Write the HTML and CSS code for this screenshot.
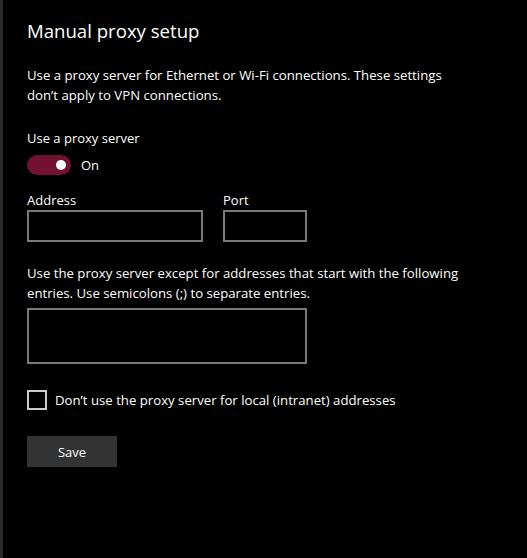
FILE: index.html
```html
<!DOCTYPE html>
<html>
<head>
<meta charset="utf-8">
<link rel="stylesheet" href="styles.css">
</head>
<body>
<div class="page">
  <h1 class="title">Manual proxy setup</h1>
  <p class="desc">Use a proxy server for Ethernet or Wi-Fi connections. These settings don’t apply to VPN connections.</p>
  <div class="label-main">Use a proxy server</div>
  <div class="toggle-row">
    <span class="toggle"><span class="knob"></span></span>
    <span class="toggle-text">On</span>
  </div>
  <div class="fields">
    <div class="field">
      <div class="field-label">Address</div>
      <div class="input address"></div>
    </div>
    <div class="field">
      <div class="field-label">Port</div>
      <div class="input port"></div>
    </div>
  </div>
  <p class="desc desc2">Use the proxy server except for addresses that start with the following entries. Use semicolons (;) to separate entries.</p>
  <div class="input exceptions"></div>
  <div class="check-row">
    <span class="checkbox"></span>
    <span class="check-text">Don’t use the proxy server for local (intranet) addresses</span>
  </div>
  <div class="button">Save</div>
</div>
</body>
</html>
```
FILE: styles.css
```css
html, body {
  margin: 0;
  padding: 0;
  background: #000;
  height: 100%;
}
body {
  font-family: "Open Sans", "Noto Sans", sans-serif;
  color: #fff;
}
.page {
  border-left: 3px solid #2b2b2b;
  min-height: 558px;
  box-sizing: border-box;
  padding: 17px 0 0 24px;
}
.title {
  margin: 0;
  font-size: 18.6px;
  font-weight: 400;
  line-height: 28px;
}
.desc {
  margin: 20px 0 0 0;
  font-size: 13.2px;
  line-height: 20px;
  width: 435px;
}
.label-main {
  margin-top: 23px;
  font-size: 13px;
  line-height: 20px;
}
.toggle-row {
  display: flex;
  align-items: center;
  margin-top: 7px;
  height: 20px;
}
.toggle {
  width: 44px;
  height: 20px;
  border-radius: 10px;
  background: #731133;
  display: flex;
  align-items: center;
  justify-content: flex-end;
  padding-right: 5px;
  box-sizing: border-box;
}
.knob {
  width: 10px;
  height: 10px;
  border-radius: 50%;
  background: #fff;
}
.toggle-text {
  margin-left: 10px;
  font-size: 13px;
}
.fields {
  display: flex;
  gap: 20px;
  margin-top: 15px;
}
.field-label {
  font-size: 13px;
  line-height: 20px;
}
.input {
  border: 2px solid #7a7a7a;
  box-sizing: border-box;
  height: 32px;
}
.address { width: 176px; }
.port { width: 84px; }
.desc2 {
  margin-top: 21px;
}
.exceptions {
  width: 280px;
  height: 56px;
  margin-top: 5px;
}
.check-row {
  display: flex;
  align-items: center;
  margin-top: 26px;
}
.checkbox {
  width: 20px;
  height: 20px;
  border: 2px solid #cccccc;
  box-sizing: border-box;
}
.check-text {
  margin-left: 8px;
  font-size: 13.2px;
}
.button {
  margin-top: 26px;
  width: 90px;
  height: 31px;
  background: #333333;
  display: flex;
  align-items: center;
  justify-content: center;
  font-size: 13px;
}
```
